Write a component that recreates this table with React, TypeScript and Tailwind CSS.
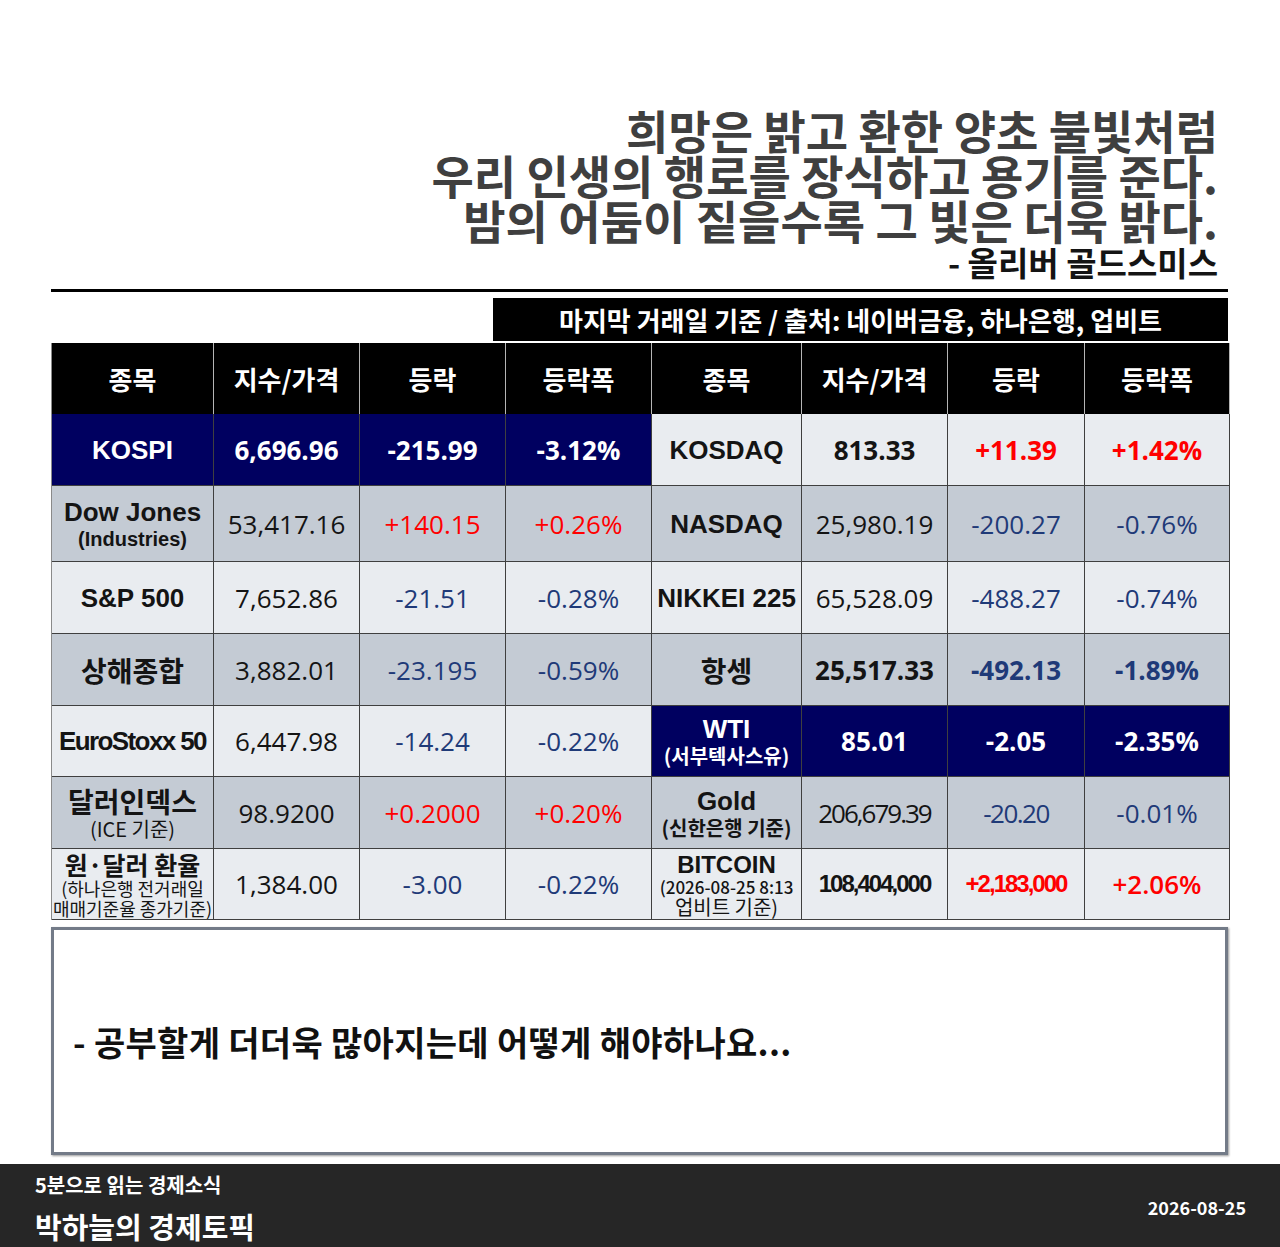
import React from "react";

const KR = "font-['Noto_Sans_CJK_KR',sans-serif]";
const NAME = "font-['Liberation_Sans','Noto_Sans_CJK_KR',sans-serif] font-bold text-[26px] leading-[30px]";
const KNAME = "font-['Noto_Sans_CJK_KR',sans-serif] font-bold text-[28px] leading-[32px]";
const NUM = "font-['Open_Sans','Noto_Sans_CJK_KR',sans-serif] text-[26px] leading-[30px]";

const NAVY = "bg-[#000060] text-white";
const LIGHT = "bg-[#e9ecf0] text-[#141414]";
const DARK = "bg-[#c4cbd4] text-[#141414]";

const RED = "text-[#ff0000]";
const BLUE = "text-[#1f3a78]";

const cols = "grid grid-cols-[162px_146px_146px_146px_150px_146px_137px_145px]";

function Cell({ bg, children }: { bg: string; children: React.ReactNode }) {
  return (
    <div className={`flex flex-col items-center justify-center border-r border-b border-[#3f3f3f] text-center ${bg}`}>
      {children}
    </div>
  );
}

function Sub({ children, className = "" }: { children: React.ReactNode; className?: string }) {
  return <span className={`${KR} text-[20px] leading-[24px] whitespace-nowrap ${className}`}>{children}</span>;
}

const headers = ["종목", "지수/가격", "등락", "등락폭", "종목", "지수/가격", "등락", "등락폭"];

export default function App() {
  return (
    <div className="w-[1280px] h-[1247px] bg-white flex flex-col overflow-hidden">
      {/* Quote */}
      <div className={`${KR} font-bold text-right text-[#3f3f3f] pt-[107px] pr-[62px]`}>
        <div className="text-[46px] leading-[45px]">희망은 밝고 환한 양초 불빛처럼</div>
        <div className="text-[46px] leading-[45px]">우리 인생의 행로를 장식하고 용기를 준다.</div>
        <div className="text-[46px] leading-[45px]">밤의 어둠이 짙을수록 그 빛은 더욱 밝다.</div>
        <div className="text-[33px] leading-[40px] text-[#141414]">- 올리버 골드스미스</div>
      </div>

      <div className="mt-[7px] ml-[51px] w-[1177px] h-[3px] bg-black" />

      {/* Source banner */}
      <div className={`${KR} mt-[6px] ml-[493px] w-[735px] h-[43px] bg-black text-white font-bold text-[26px] leading-[30px] flex items-center justify-center`}>
        마지막 거래일 기준 / 출처: 네이버금융, 하나은행, 업비트
      </div>

      {/* Table */}
      <div className="mt-[2px] ml-[51px] w-[1178px] border-l border-[#8a8a8a]">
        <div className={`${cols} h-[71px] bg-black`}>
          {headers.map((h, i) => (
            <div key={i} className={`${KR} flex items-center justify-center border-r border-[#b5b5b5] text-white font-bold text-[26px]`}>
              {h}
            </div>
          ))}
        </div>

        <div className={`${cols} h-[72px]`}>
          <Cell bg={NAVY}><span className={NAME}>KOSPI</span></Cell>
          <Cell bg={NAVY}><span className={`${NUM} font-bold`}>6,696.96</span></Cell>
          <Cell bg={NAVY}><span className={`${NUM} font-bold`}>-215.99</span></Cell>
          <Cell bg={NAVY}><span className={`${NUM} font-bold`}>-3.12%</span></Cell>
          <Cell bg={LIGHT}><span className={NAME}>KOSDAQ</span></Cell>
          <Cell bg={LIGHT}><span className={`${NUM} font-bold`}>813.33</span></Cell>
          <Cell bg={LIGHT}><span className={`${NUM} font-bold ${RED}`}>+11.39</span></Cell>
          <Cell bg={LIGHT}><span className={`${NUM} font-bold ${RED}`}>+1.42%</span></Cell>
        </div>

        <div className={`${cols} h-[76px]`}>
          <Cell bg={DARK}>
            <span className={NAME}>Dow Jones</span>
            <span className="font-['Liberation_Sans',sans-serif] font-bold text-[20px] leading-[24px]">(Industries)</span>
          </Cell>
          <Cell bg={DARK}><span className={NUM}>53,417.16</span></Cell>
          <Cell bg={DARK}><span className={`${NUM} ${RED}`}>+140.15</span></Cell>
          <Cell bg={DARK}><span className={`${NUM} ${RED}`}>+0.26%</span></Cell>
          <Cell bg={DARK}><span className={NAME}>NASDAQ</span></Cell>
          <Cell bg={DARK}><span className={NUM}>25,980.19</span></Cell>
          <Cell bg={DARK}><span className={`${NUM} ${BLUE}`}>-200.27</span></Cell>
          <Cell bg={DARK}><span className={`${NUM} ${BLUE}`}>-0.76%</span></Cell>
        </div>

        <div className={`${cols} h-[72px]`}>
          <Cell bg={LIGHT}><span className={NAME}>S&amp;P 500</span></Cell>
          <Cell bg={LIGHT}><span className={NUM}>7,652.86</span></Cell>
          <Cell bg={LIGHT}><span className={`${NUM} ${BLUE}`}>-21.51</span></Cell>
          <Cell bg={LIGHT}><span className={`${NUM} ${BLUE}`}>-0.28%</span></Cell>
          <Cell bg={LIGHT}><span className={`${NAME} whitespace-nowrap`}>NIKKEI 225</span></Cell>
          <Cell bg={LIGHT}><span className={NUM}>65,528.09</span></Cell>
          <Cell bg={LIGHT}><span className={`${NUM} ${BLUE}`}>-488.27</span></Cell>
          <Cell bg={LIGHT}><span className={`${NUM} ${BLUE}`}>-0.74%</span></Cell>
        </div>

        <div className={`${cols} h-[72px]`}>
          <Cell bg={DARK}><span className={KNAME}>상해종합</span></Cell>
          <Cell bg={DARK}><span className={NUM}>3,882.01</span></Cell>
          <Cell bg={DARK}><span className={`${NUM} ${BLUE}`}>-23.195</span></Cell>
          <Cell bg={DARK}><span className={`${NUM} ${BLUE}`}>-0.59%</span></Cell>
          <Cell bg={DARK}><span className={KNAME}>항셍</span></Cell>
          <Cell bg={DARK}><span className={`${NUM} font-bold`}>25,517.33</span></Cell>
          <Cell bg={DARK}><span className={`${NUM} font-bold ${BLUE}`}>-492.13</span></Cell>
          <Cell bg={DARK}><span className={`${NUM} font-bold ${BLUE}`}>-1.89%</span></Cell>
        </div>

        <div className={`${cols} h-[71px]`}>
          <Cell bg={LIGHT}><span className={`${NAME} tracking-[-1.6px] whitespace-nowrap`}>EuroStoxx 50</span></Cell>
          <Cell bg={LIGHT}><span className={NUM}>6,447.98</span></Cell>
          <Cell bg={LIGHT}><span className={`${NUM} ${BLUE}`}>-14.24</span></Cell>
          <Cell bg={LIGHT}><span className={`${NUM} ${BLUE}`}>-0.22%</span></Cell>
          <Cell bg={NAVY}>
            <span className={`${NAME} leading-[28px]`}>WTI</span>
            <Sub className="font-bold">(서부텍사스유)</Sub>
          </Cell>
          <Cell bg={NAVY}><span className={`${NUM} font-bold`}>85.01</span></Cell>
          <Cell bg={NAVY}><span className={`${NUM} font-bold`}>-2.05</span></Cell>
          <Cell bg={NAVY}><span className={`${NUM} font-bold`}>-2.35%</span></Cell>
        </div>

        <div className={`${cols} h-[72px]`}>
          <Cell bg={DARK}>
            <span className={KNAME}>달러인덱스</span>
            <Sub>(ICE 기준)</Sub>
          </Cell>
          <Cell bg={DARK}><span className={NUM}>98.9200</span></Cell>
          <Cell bg={DARK}><span className={`${NUM} ${RED}`}>+0.2000</span></Cell>
          <Cell bg={DARK}><span className={`${NUM} ${RED}`}>+0.20%</span></Cell>
          <Cell bg={DARK}>
            <span className={`${NAME} leading-[30px]`}>Gold</span>
            <Sub className="font-bold">(신한은행 기준)</Sub>
          </Cell>
          <Cell bg={DARK}><span className={`${NUM} tracking-[-2px]`}>206,679.39</span></Cell>
          <Cell bg={DARK}><span className={`${NUM} tracking-[-1.5px] ${BLUE}`}>-20.20</span></Cell>
          <Cell bg={DARK}><span className={`${NUM} ${BLUE}`}>-0.01%</span></Cell>
        </div>

        <div className={`${cols} h-[71px]`}>
          <Cell bg={LIGHT}>
            <span className={`${KR} font-bold text-[25px] leading-[27px] whitespace-nowrap`}>원·달러 환율</span>
            <span className={`${KR} text-[18px] leading-[20px] whitespace-nowrap -mx-[8px]`}>(하나은행 전거래일</span>
            <span className={`${KR} text-[18px] leading-[20px] whitespace-nowrap -mx-[8px]`}>매매기준율 종가기준)</span>
          </Cell>
          <Cell bg={LIGHT}><span className={NUM}>1,384.00</span></Cell>
          <Cell bg={LIGHT}><span className={`${NUM} ${BLUE}`}>-3.00</span></Cell>
          <Cell bg={LIGHT}><span className={`${NUM} ${BLUE}`}>-0.22%</span></Cell>
          <Cell bg={LIGHT}>
            <span className="font-['Liberation_Sans',sans-serif] font-bold text-[24px] leading-[25px]">BITCOIN</span>
            <span className={`${KR} font-medium text-[17px] leading-[20px] whitespace-nowrap -mx-[8px]`}>(2026-08-25 8:13</span>
            <span className={`${KR} text-[20px] leading-[20px] whitespace-nowrap`}>업비트 기준)</span>
          </Cell>
          <Cell bg={LIGHT}>
            <span className="font-['Liberation_Sans',sans-serif] font-bold text-[24px] tracking-[-2px]">108,404,000</span>
          </Cell>
          <Cell bg={LIGHT}>
            <span className={`font-['Liberation_Sans',sans-serif] font-bold text-[24px] tracking-[-2px] ${RED}`}>+2,183,000</span>
          </Cell>
          <Cell bg={LIGHT}><span className={`${NUM} font-semibold ${RED}`}>+2.06%</span></Cell>
        </div>
      </div>

      {/* Comment box */}
      <div className="mt-[7px] ml-[51px] w-[1177px] h-[228px] border-[3px] border-[#737b88] shadow-[1px_1px_2px_rgba(0,0,0,0.4)] flex items-center pl-[19px]">
        <span className={`${KR} font-bold text-[34px] tracking-[0.3px] text-[#111111]`}>- 공부할게 더더욱 많아지는데 어떻게 해야하나요...</span>
      </div>

      {/* Footer */}
      <div className={`${KR} mt-[9px] h-[83px] bg-[#262626] text-white font-bold flex justify-between pl-[35px] pr-[34px] pt-[8px]`}>
        <div className="flex flex-col">
          <span className="text-[20px] leading-[26px]">5분으로 읽는 경제소식</span>
          <span className="text-[29px] leading-[40px] mt-[8px]">박하늘의 경제토픽</span>
        </div>
        <span className="text-[18px] leading-[26px] mt-[22px]">2026-08-25</span>
      </div>
    </div>
  );
}
